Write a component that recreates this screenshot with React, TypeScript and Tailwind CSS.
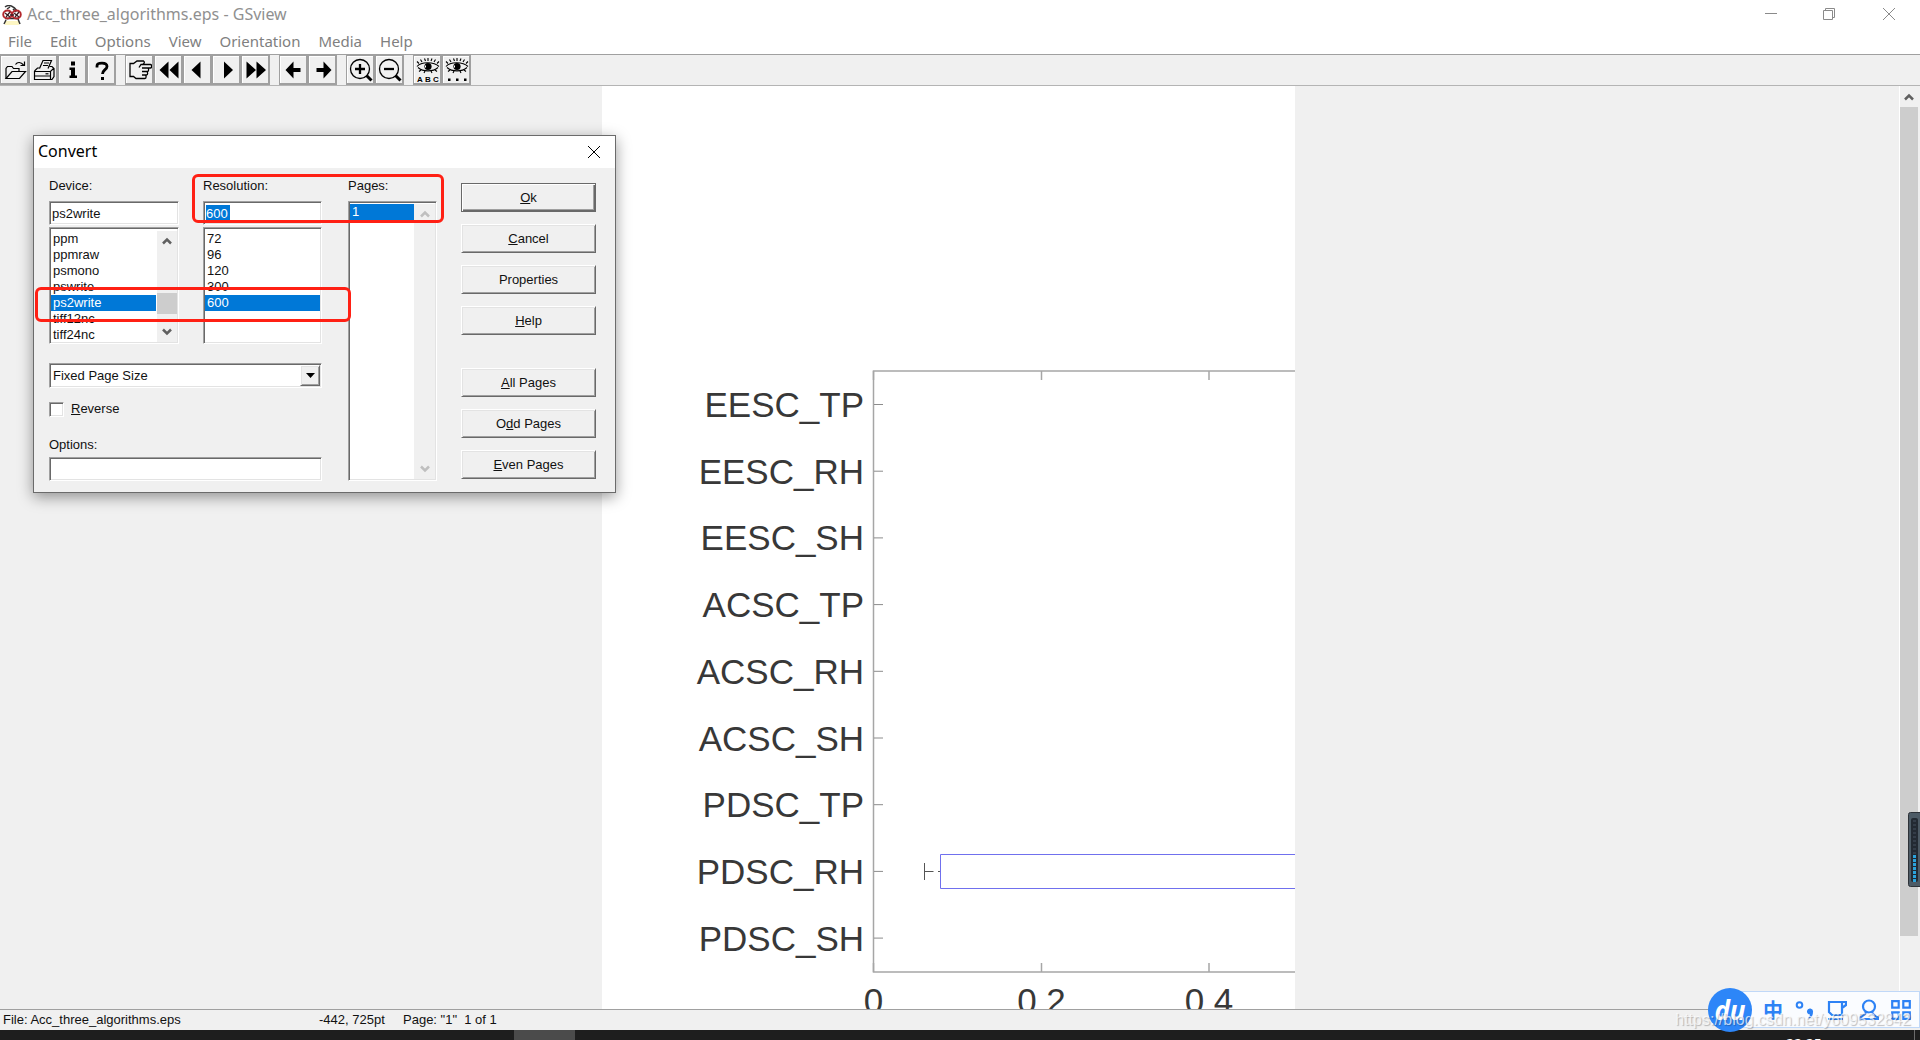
import { useState } from 'react'
import type { ReactNode } from 'react'
import clsx from 'clsx'

const MENU = ['File', 'Edit', 'Options', 'View', 'Orientation', 'Media', 'Help']

const DEVICES = ['ppm', 'ppmraw', 'psmono', 'pswrite', 'ps2write', 'tiff12nc', 'tiff24nc']
const RESOLUTIONS = ['72', '96', '120', '300', '600']

const ROWS = ['EESC_TP', 'EESC_RH', 'EESC_SH', 'ACSC_TP', 'ACSC_RH', 'ACSC_SH', 'PDSC_TP', 'PDSC_RH', 'PDSC_SH']

// classic 3D edges
const SUNKEN =
  'border border-t-[#a0a0a0] border-l-[#a0a0a0] border-r-white border-b-white shadow-[inset_1px_1px_0_#696969,inset_-1px_-1px_0_#e3e3e3] p-px'
const RAISED =
  'border border-t-white border-l-white border-r-[#696969] border-b-[#696969] shadow-[inset_1px_1px_0_#e3e3e3,inset_-1px_-1px_0_#a0a0a0]'

const ICONS: Record<string, ReactNode> = {
  Open: (
    <g fill="none" stroke="#000" strokeWidth="1.2">
      <path d="M3 20.500V10.500l1.500-2H9l1.500 2h5.500v3" />
      <path d="M3 20.500l6-7h13.500l-6 7z" />
      <path d="M12.500 6.500c2-3 5.500-2.500 8 .5M21.500 3.500v4h-4" />
    </g>
  ),
  Print: (
    <g fill="none" stroke="#000" strokeWidth="1.2">
      <path d="M7.500 10.500L11 2.500h8.500l-3.500 8M12 5h5M11 7.500h5" />
      <path d="M2.500 13l3-3h2M17.500 8.500h2.500l2 2v8l-2 3H2.500V13.500h16l3.500-3.500M2.500 18h16M18.500 14v7" />
      <path d="M13.500 15.800h3" />
    </g>
  ),
  Info: <path d="M10 3.500h4v4h-4zM8.500 9.500H14v8h2V20H8.500v-2.500H10V12H8.500z" />,
  Help: (
    <>
      <path d="M7 9.500V8c0-2 2-2.800 5-2.800s5 .8 5 3.300c0 3-4.500 3.500-4.500 7.500" fill="none" stroke="#000" strokeWidth="2.800" />
      <path d="M11 19h3v3h-3z" />
    </>
  ),
  Goto: (
    <g fill="none" stroke="#000" strokeWidth="1.300">
      <path d="M13 6.500h9.500c1.500 0 1.500 3.500 0 3.500H14M14 10h5.500c1.500 0 1.500 3.500 0 3.500H14M14 13.500h4.500c1.500 0 1.500 3.500 0 3.500H14M14 17h3c1.500 0 1.500 3.500 0 3.500H8L5.500 18.500H2V5.500h3.500L9 3h6.500c2 1.500 0 3.500-2.500 3.500L11 9.500" />
    </g>
  ),
  'Back 10': <path d="M11.500 3.500v17L2.500 12zM21.500 3.500v17l-9-8.500z" />,
  Previous: <path d="M14.500 3.500v17L5.500 12z" />,
  Next: <path d="M9 3.500v17l9-8.500z" />,
  'Forward 10': <path d="M2.500 3.500v17L12 12zM12.500 3.500v17L22 12z" />,
  Back: <path d="M3.500 12l8-8.500V10h7v4h-7v6.500z" />,
  Forward: <path d="M20.500 12l-8-8.500V10h-7v4h7v6.500z" />,
  'Zoom in': (
    <g fill="none" stroke="#000">
      <circle cx="11" cy="11" r="9.500" strokeWidth="1.300" />
      <path d="M11 6v10M6 11h10" strokeWidth="2.300" />
      <path d="M17.500 17.500l5 5" strokeWidth="3" />
    </g>
  ),
  'Zoom out': (
    <g fill="none" stroke="#000">
      <circle cx="11" cy="11" r="9.500" strokeWidth="1.300" />
      <path d="M6 11h10" strokeWidth="2.300" />
      <path d="M17.500 17.500l5 5" strokeWidth="3" />
    </g>
  ),
  Find: (
    <>
      <Eye />
      <g fontFamily="Liberation Sans" fontSize="8" fontWeight="700" textAnchor="middle">
        <text x="4" y="23.500">A</text>
        <text x="12" y="23.500">B</text>
        <text x="20" y="23.500">C</text>
      </g>
    </>
  ),
  'Find next': (
    <>
      <Eye />
      <path d="M3 20.500h2.500V23H3zM11 20.500h2.500V23H11zM19 20.500h2.500V23H19z" />
    </>
  ),
}

const TOOL_GROUPS = [
  ['Open', 'Print', 'Info', 'Help'],
  ['Goto', 'Back 10', 'Previous', 'Next', 'Forward 10'],
  ['Back', 'Forward'],
  ['Zoom in', 'Zoom out'],
  ['Find', 'Find next'],
]

function Eye() {
  return (
    <>
      <g fill="none" stroke="#000" strokeWidth="1.100">
        <path d="M1 8.500C5 3.500 18 3.500 23 8.500M2 9.500c5 4.500 15 4.500 20 0" />
        <path d="M3 5.500L1 3.500M6 4L4.500 1.500M9.500 3L8.500 .5M12 3V0M15 3l1-2.500M18 4l1.500-2.500M21 5.500l2-2M5 12l-2 1.500M9 13l-1 2M15 13l1 2M19 12l2 1.500" />
      </g>
      <circle cx="12" cy="8.500" r="3.600" />
      <path d="M9 7.500h1v2H9z" fill="#fff" />
    </>
  )
}

function TitleBar() {
  return (
    <header className="flex h-[30px] items-center bg-white pl-0.5 text-[#909090]">
      <svg width="20" height="20" viewBox="0 0 20 20">
        <path d="M3 16h14v4H3z" fill="#fdf6c3" />
        <path d="M3 2c4-3 9-1 12 4M4 15l-2 4M16 14l2 5M3 13.500h14M5 4l3-2M11 4l3 3" fill="none" stroke="#333" strokeWidth="1.500" />
        <g fill="none" stroke="#b3282d" strokeWidth="1.900">
          <ellipse cx="5.500" cy="9.500" rx="4.300" ry="4" />
          <ellipse cx="14.500" cy="9.500" rx="4.300" ry="4" />
        </g>
        <path d="M3 8l5 4M8 7l-4 5M12 8l5 4M17 7l-4 5M8 10h4" stroke="#3b2024" strokeWidth="1.300" />
      </svg>
      <h1 className="ml-[5px] flex-1 pb-0.5 text-[16px] leading-6">Acc_three_algorithms.eps - GSview</h1>
      <button aria-label="Minimize" className="flex h-full w-[58px] items-center justify-center pb-0.5">
        <svg width="12" height="12" stroke="#8a8a8a"><path d="M0 5.500h12" /></svg>
      </button>
      <button aria-label="Restore" className="flex h-full w-[58px] items-center justify-center pb-0.5">
        <svg width="12" height="12" fill="none" stroke="#8a8a8a">
          <path d="M.5 2.500h9v9h-9zM2.500 2.500v-2h9v9h-2" />
        </svg>
      </button>
      <button aria-label="Close" className="flex h-full w-[62px] items-center justify-center pb-0.5">
        <svg width="12" height="12" stroke="#8a8a8a"><path d="M0 0l12 12M12 0L0 12" /></svg>
      </button>
    </header>
  )
}

function Toolbar() {
  return (
    <div className="flex gap-[9px] border-t border-b border-[#a0a0a0] border-b-[#b4b4b4] bg-[#f0f0f0]">
      {TOOL_GROUPS.map((group) => (
        <div key={group[0]} className="flex bg-[#a0a0a0]">
          {group.map((name) => (
            <button
              key={name}
              aria-label={name}
              className="mt-px mr-0.5 mb-0.5 ml-px flex h-[27px] w-[26px] items-center justify-center border-t border-l border-white bg-[#f0f0f0]"
            >
              <svg width="24" height="24" viewBox="0 0 24 24" className="shrink-0">{ICONS[name]}</svg>
            </button>
          ))}
        </div>
      ))}
    </div>
  )
}

// y-axis rows are 66.7px apart, x-axis steps of 0.2 are 168px
function Plot() {
  return (
    <svg className="h-full w-full" fontFamily="'Liberation Sans', Arial, sans-serif" fontSize="35" fill="#383838">
      <g stroke="#a6a6a6" strokeWidth="1.500" fill="none">
        <path d="M693 285H271.500V886H693" />
        <path d="M271.500 285v9M439.500 285v9M607 285v9M271.500 886v-9M439.500 886v-9M607 886v-9" />
      </g>
      {ROWS.map((row, i) => {
        const y = 318.5 + i * 66.7
        return (
          <g key={row}>
            <path d={`M272 ${y}h9`} stroke="#8c8c8c" />
            <text x="262" y={y + 12.5} textAnchor="end">{row}</text>
          </g>
        )
      })}
      <path d="M322.500 777v17M322.500 785.500h9M336 785.500h2.500" stroke="#555" />
      <path d="M693 768.500H338.500v34H693" stroke="#7070ee" fill="none" />
      <g textAnchor="middle">
        <text x="271.500" y="927">0</text>
        <text x="439.500" y="927">0.2</text>
        <text x="607" y="927">0.4</text>
      </g>
    </svg>
  )
}

function Chevron({ up, muted }: { up?: boolean; muted?: boolean }) {
  return (
    <svg width="10" height="8" viewBox="0 0 10 8" fill="none" stroke={muted ? '#bfbfbf' : '#606060'} strokeWidth="2.500">
      <path d={up ? 'M1 6.500l4-4 4 4' : 'M1 1.500l4 4 4-4'} />
    </svg>
  )
}

function Viewport() {
  return (
    <main className="relative flex min-h-0 flex-1">
      <div className="flex flex-1 justify-center overflow-hidden pr-0.5">
        <div className="w-[693px] bg-white"><Plot /></div>
      </div>
      <div className="flex w-[21px] flex-col border-l border-white bg-[#f0f0f0] pr-0.5">
        <div className="flex h-[21px] items-center justify-center"><Chevron up /></div>
        <div className="h-[829px] bg-[#cdcdcd]" />
      </div>
      {/* sound level widget docked on the screen edge */}
      <svg className="absolute top-[726px] right-0" width="12" height="75">
        <rect x=".5" y=".5" width="14" height="74" rx="2" fill="#4d5b66" stroke="#2d3238" />
        <rect x="3" y="6" width="7" height="64" rx="2" fill="#232a33" />
        <path d="M6.500 8v34" stroke="#343d49" strokeWidth="3" strokeDasharray="2 2" />
        <path d="M6.500 43v27" stroke="#2ba3dc" strokeWidth="3" strokeDasharray="3 1" />
      </svg>
    </main>
  )
}

interface ListProps {
  label: string
  items: string[]
  value: string
  onChange: (v: string) => void
  children?: ReactNode
  className?: string
}

function ListBox({ label, items, value, onChange, children, className }: ListProps) {
  return (
    <div className={clsx('flex overflow-hidden bg-white', SUNKEN, className)}>
      <ul role="listbox" aria-label={label} className="flex-1 overflow-hidden">
        {items.map((item) => (
          <li
            key={item}
            role="option"
            aria-selected={item === value}
            onClick={() => onChange(item)}
            className={clsx('h-4 pl-0.5 leading-4', item === value && 'bg-[#0078d7] text-white')}
          >
            {item}
          </li>
        ))}
      </ul>
      {children}
    </div>
  )
}

function DialogButton({ children, isDefault, onClick }: { children: ReactNode; isDefault?: boolean; onClick?: () => void }) {
  return (
    <button
      type="button"
      onClick={onClick}
      className={clsx(
        'h-[29px] border bg-[#f0f0f0]',
        isDefault
          ? 'border-[#696969] shadow-[inset_1px_1px_0_#fff,inset_-1px_-1px_0_#696969,inset_-2px_-2px_0_#a0a0a0]'
          : RAISED,
      )}
    >
      {children}
    </button>
  )
}

function ConvertDialog() {
  const [device, setDevice] = useState('ps2write')
  const [resolution, setResolution] = useState('600')
  const [page, setPage] = useState('1')

  return (
    <section
      role="dialog"
      aria-label="Convert"
      className="absolute top-[135px] left-[33px] border border-[#6b6b6b] bg-[#f0f0f0] font-['Liberation_Sans',Arial,sans-serif] text-[13px] leading-4 text-[#111] shadow-[0_4px_14px_rgba(0,0,0,0.4)]"
    >
      <div className="flex h-8 items-center justify-between bg-white pr-[15px] pl-1">
        <h2 className="pb-0.5 font-['Noto_Sans','Open_Sans',sans-serif] text-[16px] text-black">Convert</h2>
        <button aria-label="Close dialog">
          <svg width="12" height="12" stroke="#000"><path d="M0 0l12 12M12 0L0 12" /></svg>
        </button>
      </div>

      <form className="flex pt-[10px] pr-[19px] pb-[11px] pl-[15px]">
        <div className="flex flex-col">
          <div className="flex gap-6">
            <div className="flex w-[130px] flex-col">
              <label htmlFor="device" className="mb-[7px]">Device:</label>
              <input id="device" value={device} onChange={(e) => setDevice(e.target.value)} className={clsx('h-6 bg-white pl-0.5', SUNKEN)} />
              <ListBox label="Devices" items={DEVICES} value={device} onChange={setDevice} className="mt-0.5 h-[117px] pt-[3px]">
                <div className="ml-px flex w-5 flex-col items-center justify-between bg-[#f0f0f0] py-1.5">
                  <Chevron up />
                  <div className="mt-[34px] h-[21px] w-full bg-[#cdcdcd]" />
                  <Chevron />
                </div>
              </ListBox>
            </div>
            <div className="flex w-[119px] flex-col">
              <label htmlFor="resolution" className="mb-[7px]">Resolution:</label>
              <div className={clsx('flex h-6 items-center bg-white', SUNKEN)}>
                <input
                  id="resolution"
                  value={resolution}
                  onChange={(e) => setResolution(e.target.value)}
                  className="ml-px h-[17px] w-6 bg-[#0078d7] text-white outline-none"
                />
              </div>
              <ListBox label="Resolutions" items={RESOLUTIONS} value={resolution} onChange={setResolution} className="mt-0.5 h-[117px] pt-[3px]" />
            </div>
          </div>

          <div className="relative mt-[19px] flex">
            <select aria-label="Page size" className={clsx('h-[25px] w-full appearance-none bg-white pl-[3px]', SUNKEN)}>
              <option>Fixed Page Size</option>
            </select>
            <span className={clsx('pointer-events-none absolute top-0.5 right-0.5 bottom-0.5 flex w-5 items-center justify-center bg-[#f0f0f0]', RAISED)}>
              <svg width="9" height="5"><path d="M0 0h9L4.500 5z" /></svg>
            </span>
          </div>

          <label className="mt-[13px] flex items-center gap-[7px]">
            <input type="checkbox" className={clsx('h-[15px] w-[15px] appearance-none bg-white', SUNKEN)} />
            <span><u>R</u>everse</span>
          </label>

          <label htmlFor="options" className="mt-5 mb-1">Options:</label>
          <input id="options" className={clsx('h-6 bg-white', SUNKEN)} />
        </div>

        <div className="ml-[26px] flex w-[89px] flex-col">
          <span className="mb-[7px]">Pages:</span>
          <ListBox label="Pages" items={['1']} value={page} onChange={setPage} className="flex-1 pt-0.5">
            <div className="flex w-[21px] flex-col items-center justify-between bg-[#f0f0f0] py-1.5">
              <Chevron up muted />
              <Chevron muted />
            </div>
          </ListBox>
        </div>

        <div className="mt-[5px] ml-6 flex w-[135px] flex-col gap-3">
          <DialogButton isDefault><u>O</u>k</DialogButton>
          <DialogButton><u>C</u>ancel</DialogButton>
          <DialogButton>Properties</DialogButton>
          <DialogButton><u>H</u>elp</DialogButton>
          <div className="mt-[21px] flex flex-col gap-3">
            <DialogButton><u>A</u>ll Pages</DialogButton>
            <DialogButton>O<u>d</u>d Pages</DialogButton>
            <DialogButton><u>E</u>ven Pages</DialogButton>
          </div>
        </div>
      </form>

      {/* red markers over the fields to fill in */}
      <div className="pointer-events-none absolute top-[38px] left-[158px] h-[49px] w-[252px] rounded-md border-[3px] border-[#ff2014]" />
      <div className="pointer-events-none absolute top-[151px] left-px h-[35px] w-[316px] rounded-md border-[3px] border-[#ff2014]" />
    </section>
  )
}

function InputMethodBar() {
  return (
    <div className="absolute right-0 bottom-3 flex h-[37px] items-center border border-[#c0d8f8] bg-[#fafcff] pr-2">
      <div className="-my-1 -ml-[22px] flex h-11 w-11 items-center justify-center rounded-full bg-[#2d86f8]">
        <span className="font-['Open_Sans',sans-serif] text-[26px] leading-none font-bold text-white italic">du</span>
      </div>
      <div className="ml-[11px] flex items-center gap-3 text-[#2d82f5]">
        <span className="w-5 text-center font-['Noto_Sans_CJK_SC',sans-serif] text-[20px] leading-5 font-bold">中</span>
        <svg width="20" height="20" viewBox="0 0 20 20">
          <circle cx="4.500" cy="5" r="2.800" fill="none" stroke="currentColor" strokeWidth="2" />
          <path d="M12 11a3 3 0 1 1 6 1c0 3.500-1.500 5.500-4 6.500l-1-1c1.500-1 2-2 2-3a3 3 0 0 1-3-3.500z" fill="currentColor" />
        </svg>
        <svg width="20" height="20" viewBox="0 0 20 20" fill="none" stroke="currentColor" strokeWidth="2.200">
          <path d="M2 2h13v13H5l-3-3zM15 2h4v3l-4 3M1 19h15" />
        </svg>
        <svg width="20" height="22" viewBox="0 0 20 22" fill="none" stroke="currentColor" strokeWidth="2.200">
          <circle cx="10" cy="7.500" r="6" />
          <path d="M7 13c-1 3-3 4-6 5.500v1.500h18v-1.500c-3-1.500-5-2.500-6-5.500" />
        </svg>
        <svg width="20" height="20" viewBox="0 0 20 20" fill="none" stroke="currentColor" strokeWidth="2.200">
          <path d="M1.200 1.200h6.500v6.500H1.200zM12.300 1.200h6.500v6.500h-6.500zM1.200 12.300h6.500v6.500H1.200zM12.300 12.300h6.500v6.500h-6.500z" />
        </svg>
      </div>
    </div>
  )
}

export default function App() {
  return (
    <div className="relative flex h-screen flex-col overflow-hidden bg-[#f0f0f0] font-['Noto_Sans','Open_Sans',sans-serif]">
      <TitleBar />
      <nav className="flex h-6 items-center gap-[18px] bg-white pb-0.5 pl-2 text-[15px] text-[#808080]">
        {MENU.map((item) => (
          <button key={item} className="leading-5">{item}</button>
        ))}
      </nav>
      <Toolbar />
      <Viewport />

      <footer className="flex h-[21px] items-center border-t border-[#a0a0a0] pl-[3px] font-['Liberation_Sans',Arial,sans-serif] text-[13px] whitespace-pre text-[#111]">
        <span className="w-[316px]">File: Acc_three_algorithms.eps</span>
        <span className="w-[84px]">-442, 725pt</span>
        <span>Page: "1"  1 of 1</span>
      </footer>
      <div className="flex h-[10px] justify-between overflow-hidden bg-[#1e1e1e]">
        <div className="ml-[514px] w-[61px] bg-[#4b4b4b]" />
        <div className="mr-[5px] flex w-[129px] border-r border-[#6b6b6b] pt-1 text-[14px] leading-5 text-white">22:25</div>
      </div>

      <ConvertDialog />
      <InputMethodBar />
      <span className="pointer-events-none absolute right-[9px] bottom-2.5 font-['Liberation_Sans',Arial,sans-serif] text-[16px] leading-5 text-white/70 [text-shadow:1px_1px_1px_rgba(0,0,0,0.25)]">
        https://blog.csdn.net/y609532842
      </span>
    </div>
  )
}
